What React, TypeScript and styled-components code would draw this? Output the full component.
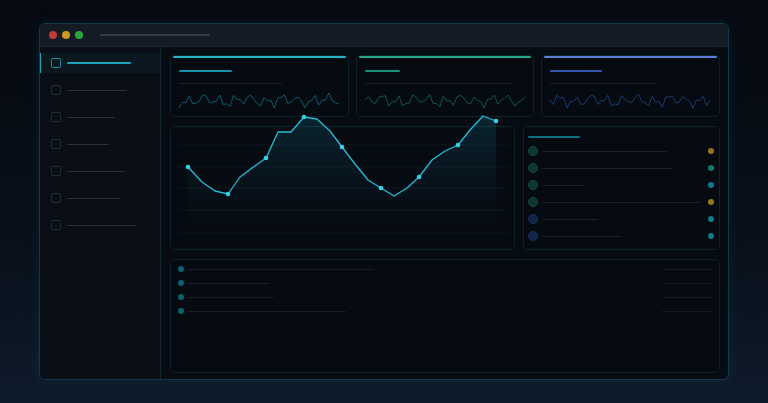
import React from 'react';
import styled, { createGlobalStyle } from 'styled-components';

const GlobalStyle = createGlobalStyle`
  html, body {
    margin: 0;
    padding: 0;
    background: #070b12;
    font-family: "Inter", "Liberation Sans", sans-serif;
  }
`;

const navItems = [
    { width: 64, active: true },
    { width: 60 },
    { width: 48 },
    { width: 42 },
    { width: 58 },
    { width: 54 },
    { width: 70 },
];

const statCards = [
    { accent: '#27b4c9', title: '#1592a8', spark: '#0f5a6c', titleWidth: 53, subWidth: 103, seed: 1 },
    { accent: '#25a88e', title: '#1a8f7c', spark: '#0f5650', titleWidth: 35, subWidth: 148, seed: 4 },
    { accent: '#5b7fd6', title: '#3257b0', spark: '#1b3a72', titleWidth: 52, subWidth: 107, seed: 7 },
];

const listRows = [
    { width: 125, circle: '#0e3532', ring: '#134843', dot: '#9a741c' },
    { width: 130, circle: '#0e3532', ring: '#134843', dot: '#0f7a70' },
    { width: 42, circle: '#0e3532', ring: '#134843', dot: '#0d7a8c' },
    { width: 158, circle: '#0e3532', ring: '#134843', dot: '#9a741c' },
    { width: 56, circle: '#112347', ring: '#17305c', dot: '#0d7a8c' },
    { width: 78, circle: '#112347', ring: '#17305c', dot: '#0d7a8c' },
];

const tableRows = [187, 83, 87, 159];

const chartPoints: [number, number][] = [
    [188, 167], [202, 182], [215, 191], [228, 194], [240, 177], [252, 168], [266, 158],
    [278, 132], [291, 132], [304, 117], [317, 119], [330, 131], [342, 147], [355, 164],
    [368, 180], [381, 188], [394, 196], [407, 188], [419, 177], [432, 160], [445, 151],
    [458, 145], [470, 130], [483, 116], [496, 121],
];
const chartDots = [0, 3, 6, 9, 12, 15, 18, 21, 24];

const Page = styled.div`
  box-sizing: border-box;
  width: 768px;
  height: 403px;
  padding: 23px 39px;
  background:
    radial-gradient(circle, rgba(40, 70, 100, 0.25) 0.7px, transparent 1px) 0 0 / 33px 33px,
    linear-gradient(180deg, #060910 0%, #08101a 60%, #0e1b2b 100%);
`;

const Window = styled.div`
  box-sizing: border-box;
  height: 357px;
  display: flex;
  flex-direction: column;
  border: 1px solid #0f3a49;
  border-radius: 6px;
  overflow: hidden;
  background: #070b12;
  box-shadow: 0 0 14px rgba(20, 130, 160, 0.14);
`;

const TitleBar = styled.div`
  height: 22px;
  display: flex;
  align-items: center;
  gap: 5px;
  padding-left: 9px;
  background: #151b25;
  border-bottom: 1px solid #1b2633;
`;

const Light = styled.span<{ $color: string }>`
  width: 8px;
  height: 8px;
  border-radius: 50%;
  background: ${({ $color }) => $color};
`;

const TitleLine = styled.span`
  width: 110px;
  height: 2px;
  margin-left: 12px;
  border-radius: 1px;
  background: #353c48;
`;

const Body = styled.div`
  flex: 1;
  display: grid;
  grid-template-columns: 121px minmax(0, 1fr);
  min-height: 0;
`;

const Sidebar = styled.nav`
  display: flex;
  flex-direction: column;
  gap: 7px;
  padding-top: 6px;
  background: #0a0e16;
  border-right: 1px solid #0f2733;
`;

const NavItem = styled.div<{ $active?: boolean }>`
  height: 20px;
  display: flex;
  align-items: center;
  gap: 6px;
  padding-left: 10px;
  border-left: 2px solid ${({ $active }) => ($active ? '#1ca3b8' : 'transparent')};
  background: ${({ $active }) => ($active ? '#0b1820' : 'transparent')};
  margin-left: -1px;
`;

const NavIcon = styled.span<{ $active?: boolean }>`
  box-sizing: border-box;
  width: 10px;
  height: 10px;
  border-radius: 2px;
  border: 1px solid ${({ $active }) => ($active ? '#1b8ea3' : '#222a34')};
`;

const NavLine = styled.span<{ $active?: boolean }>`
  height: ${({ $active }) => ($active ? '2px' : '1px')};
  background: ${({ $active }) => ($active ? '#1ca3b8' : '#2b323d')};
  border-radius: 1px;
`;

const Main = styled.main`
  display: grid;
  grid-template-columns: minmax(0, 1fr);
  grid-template-rows: 62px 124px 1fr;
  gap: 9px;
  padding: 8px 8px 6px 9px;
  min-height: 0;
`;

const StatRow = styled.div`
  display: grid;
  grid-template-columns: repeat(3, minmax(0, 1fr));
  gap: 7px;
`;

const Card = styled.div`
  position: relative;
  box-sizing: border-box;
  border: 1px solid #0e222d;
  border-radius: 5px;
  background: #060a11;
  min-width: 0;
`;

const StatCard = styled(Card)<{ $accent: string }>`
  display: flex;
  flex-direction: column;
  padding: 14px 8px 0 8px;

  &::before {
    content: '';
    position: absolute;
    top: 0;
    left: 2px;
    right: 2px;
    height: 2px;
    border-radius: 1px;
    background: ${({ $accent }) => $accent};
  }
`;

const Bar = styled.span<{ $color: string; $thick?: boolean }>`
  display: block;
  height: ${({ $thick }) => ($thick ? '2px' : '1px')};
  background: ${({ $color }) => $color};
  border-radius: 1px;
  min-width: 0;
`;

const StatSub = styled(Bar)`
  margin-top: 11px;
`;

const Spark = styled.svg`
  display: block;
  margin-top: 9px;
  overflow: visible;
`;

const MiddleRow = styled.div`
  display: grid;
  grid-template-columns: 345px minmax(0, 1fr);
  gap: 8px;
`;

const ChartCard = styled(Card)`
  overflow: visible;
`;

const ChartSvg = styled.svg`
  position: absolute;
  left: -1px;
  top: -1px;
  overflow: visible;
`;

const ListCard = styled(Card)`
  display: flex;
  flex-direction: column;
  padding: 9px 5px 0 4px;
`;

const ListRows = styled.div`
  display: flex;
  flex-direction: column;
  gap: 7px;
  margin-top: 8px;
`;

const ListRow = styled.div`
  height: 10px;
  display: flex;
  align-items: center;
  gap: 4px;
`;

const Avatar = styled.span<{ $color: string; $ring: string }>`
  box-sizing: border-box;
  width: 10px;
  height: 10px;
  border-radius: 50%;
  background: ${({ $color }) => $color};
  border: 1px solid ${({ $ring }) => $ring};
  flex-shrink: 0;
`;

const Dot = styled.span<{ $color: string; $size?: number }>`
  width: ${({ $size }) => $size || 6}px;
  height: ${({ $size }) => $size || 6}px;
  border-radius: 50%;
  background: ${({ $color }) => $color};
  flex-shrink: 0;
`;

const Spacer = styled.span`
  flex: 1;
`;

const TableCard = styled(Card)`
  display: flex;
  flex-direction: column;
  gap: 8px;
  padding: 6px 7px 0 7px;
`;

const TableRow = styled.div`
  height: 6px;
  display: flex;
  align-items: center;
  gap: 3px;
`;

const sparkPath = (seed: number, width: number, height: number) => {
    const n = 48;
    const pts: string[] = [];
    for (let i = 0; i < n; i++) {
        const v = 0.5
            + 0.28 * Math.sin(i * 1.37 + seed)
            + 0.18 * Math.sin(i * 2.91 + seed * 1.7)
            + 0.12 * Math.sin(i * 0.53 + seed * 0.6);
        const x = (i / (n - 1)) * width;
        const y = Math.max(0, Math.min(1, v)) * height;
        pts.push(`${i === 0 ? 'M' : 'L'}${x.toFixed(1)},${y.toFixed(1)}`);
    }
    return pts.join(' ');
};

const Chart = () => {
    const pts = chartPoints.map(([x, y]) => [x - 170, y - 126]);
    const line = pts.map(([x, y], i) => `${i === 0 ? 'M' : 'L'}${x},${y}`).join(' ');
    const area = `${line} L${pts[pts.length - 1][0]},120 L${pts[0][0]},120 Z`;
    return (
        <ChartSvg width={345} height={124} viewBox="0 0 345 124">
            <defs>
                <linearGradient id="areaFill" x1="0" y1="0" x2="0" y2="1">
                    <stop offset="0" stopColor="#1595b0" stopOpacity="0.2" />
                    <stop offset="0.6" stopColor="#0f5f75" stopOpacity="0.07" />
                    <stop offset="1" stopColor="#0a2a38" stopOpacity="0" />
                </linearGradient>
            </defs>
            {[19, 41, 62, 84, 107].map((y) => (
                <line key={y} x1={8} x2={338} y1={y} y2={y} stroke="#0d1721" strokeWidth={1} />
            ))}
            <path d={area} fill="url(#areaFill)" />
            <path d={line} fill="none" stroke="#24bcd6" strokeWidth={1.3} strokeLinejoin="round" />
            {chartDots.map((i) => (
                <circle key={i} cx={pts[i][0]} cy={pts[i][1]} r={2.3} fill="#35cfe6" />
            ))}
        </ChartSvg>
    );
};

export default function App() {
    return (
        <>
            <GlobalStyle />
            <Page>
                <Window>
                    <TitleBar>
                        <Light $color="#c23a33" />
                        <Light $color="#c99a1f" />
                        <Light $color="#2ea43f" />
                        <TitleLine />
                    </TitleBar>
                    <Body>
                        <Sidebar>
                            {navItems.map((item, i) => (
                                <NavItem key={i} $active={item.active}>
                                    <NavIcon $active={item.active} />
                                    <NavLine $active={item.active} style={{ width: item.width }} />
                                </NavItem>
                            ))}
                        </Sidebar>
                        <Main>
                            <StatRow>
                                {statCards.map((c, i) => (
                                    <StatCard key={i} $accent={c.accent}>
                                        <Bar $thick $color={c.title} style={{ width: c.titleWidth }} />
                                        <StatSub $color="#1a212b" style={{ width: c.subWidth }} />
                                        <Spark width={160} height={15} viewBox="0 0 160 15">
                                            <path d={sparkPath(c.seed, 160, 15)} fill="none" stroke={c.spark} strokeWidth={1} />
                                        </Spark>
                                    </StatCard>
                                ))}
                            </StatRow>
                            <MiddleRow>
                                <ChartCard>
                                    <Chart />
                                </ChartCard>
                                <ListCard>
                                    <Bar $thick $color="#0f6f82" style={{ width: 52 }} />
                                    <ListRows>
                                        {listRows.map((r, i) => (
                                            <ListRow key={i}>
                                                <Avatar $color={r.circle} $ring={r.ring} />
                                                <Bar $color="#1a212b" style={{ width: r.width }} />
                                                <Spacer />
                                                <Dot $color={r.dot} />
                                            </ListRow>
                                        ))}
                                    </ListRows>
                                </ListCard>
                            </MiddleRow>
                            <TableCard>
                                {tableRows.map((w, i) => (
                                    <TableRow key={i}>
                                        <Dot $color="#0e6172" />
                                        <Bar $color="#161d27" style={{ width: w }} />
                                        <Spacer />
                                        <Bar $color="#141b24" style={{ width: 50 }} />
                                    </TableRow>
                                ))}
                            </TableCard>
                        </Main>
                    </Body>
                </Window>
            </Page>
        </>
    );
}
